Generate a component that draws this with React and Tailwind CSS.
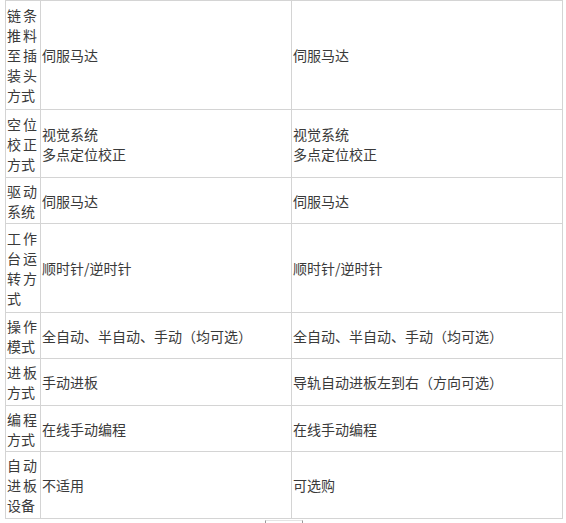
const rows = [
    { label: "链条推料至插装头方式", a: ["伺服马达"], b: ["伺服马达"], h: "h-[108px]" },
    { label: "空位校正方式", a: ["视觉系统", "多点定位校正"], b: ["视觉系统", "多点定位校正"], h: "h-[67px]" },
    { label: "驱动系统", a: ["伺服马达"], b: ["伺服马达"], h: "h-[45px]" },
    { label: "工作台运转方式", a: ["顺时针/逆时针"], b: ["顺时针/逆时针"], h: "h-[88px]" },
    { label: "操作模式", a: ["全自动、半自动、手动（均可选）"], b: ["全自动、半自动、手动（均可选）"], h: "h-[45px]" },
    { label: "进板方式", a: ["手动进板"], b: ["导轨自动进板左到右（方向可选）"], h: "h-[46px]" },
    { label: "编程方式", a: ["在线手动编程"], b: ["在线手动编程"], h: "h-[45px]" },
    { label: "自动进板设备", a: ["不适用"], b: ["可选购"], h: "h-[66px]" },
];

function Cell({ lines, h }) {
    return (
        <div className={`${h} bg-white flex items-center pl-[1px]`}>
            <div>
                {lines.map((l, i) => (
                    <div key={i}>{l}</div>
                ))}
            </div>
        </div>
    );
}

export default function App() {
    return (
        <div
            className="w-[566px] h-[523px] bg-white overflow-hidden text-[14px] leading-[20px] text-[#3a3a3a]"
            style={{ fontFamily: '"Noto Sans CJK SC", "Noto Sans", sans-serif' }}
        >
            <div className="ml-[5px] w-[558px] grid grid-cols-[34px_250px_270px] gap-px p-px bg-[#d4d4d4]">
                {rows.map((r, i) => (
                    <div key={i} className="contents">
                        <div className={`${r.h} bg-white flex items-center pl-[1px] pr-[3px]`}>
                            <div className="w-full text-justify">{r.label}</div>
                        </div>
                        <Cell lines={r.a} h={r.h} />
                        <Cell lines={r.b} h={r.h} />
                    </div>
                ))}
            </div>

            {/* bottom edge of the next block */}
            <div className="mt-px ml-[265px] w-[38px] h-[4px] border-x border-t border-x-[#999] border-t-[#e4e4e4]" />
        </div>
    );
}
